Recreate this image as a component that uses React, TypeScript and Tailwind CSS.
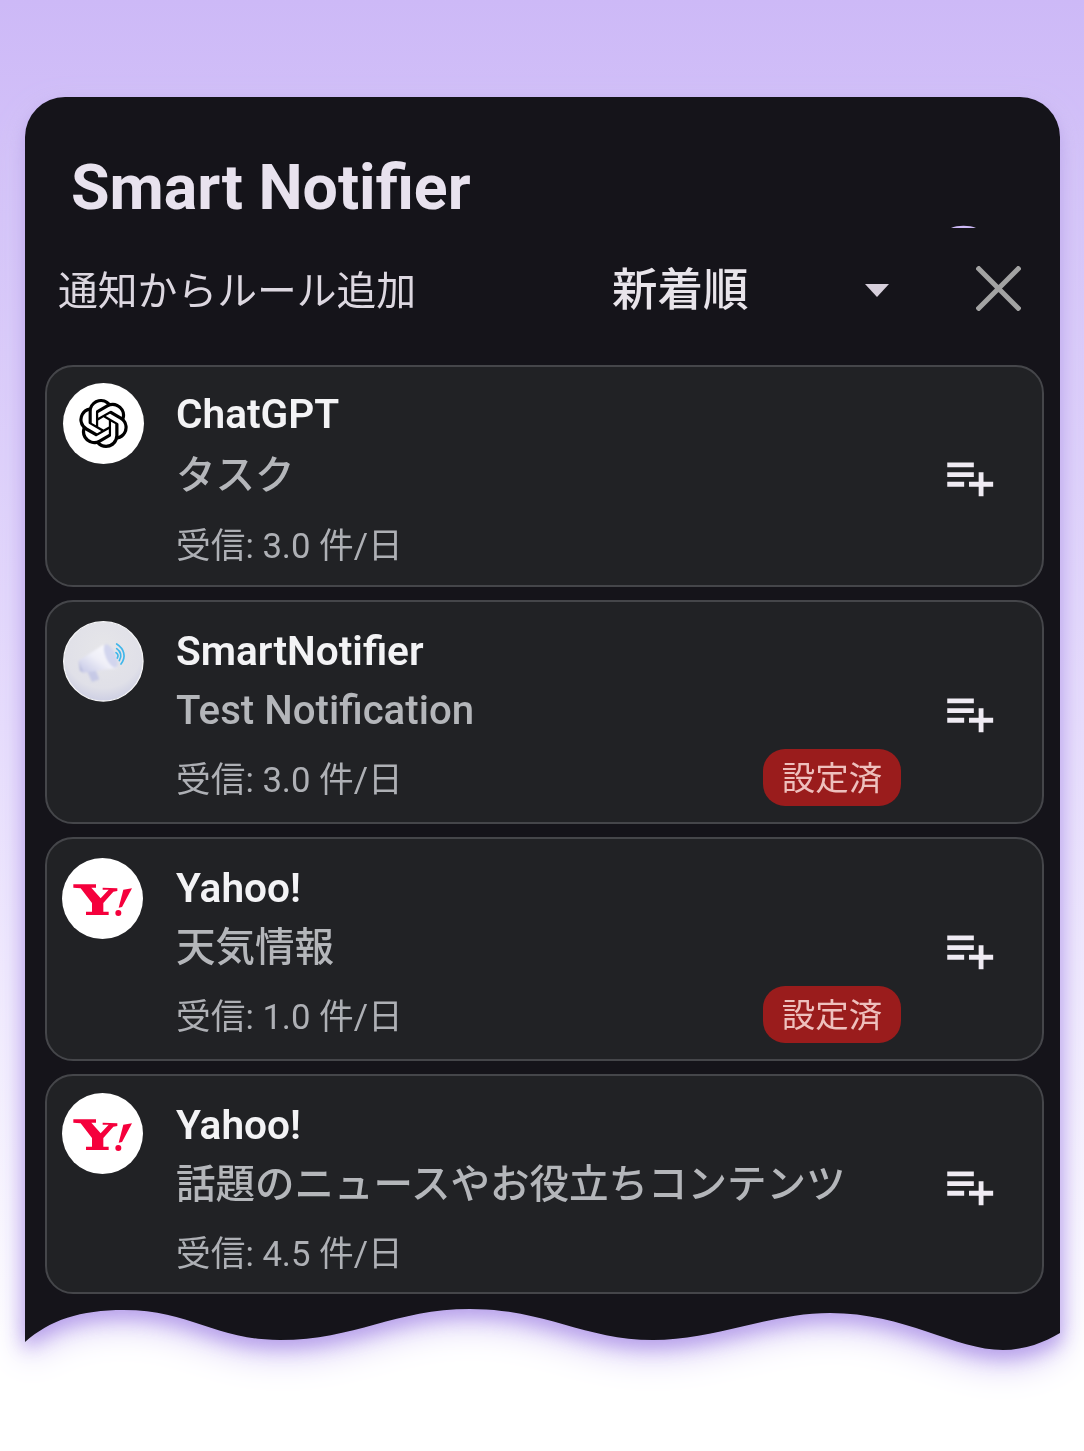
import React from "react";
import { MdPlaylistAdd } from "react-icons/md";
import { SiOpenai } from "react-icons/si";

const ChatGptAvatar = () => (
  <div className="flex h-[81px] w-[81px] items-center justify-center rounded-full bg-white">
    <SiOpenai className="h-[49px] w-[49px] text-black" />
  </div>
);

const MegaphoneAvatar = () => (
  <svg viewBox="9 9 243 243" className="h-[81px] w-[81px]">
    <defs>
      <radialGradient id="megaBg" cx="50%" cy="35%" r="70%">
        <stop offset="0%" stopColor="#e6e6e9" />
        <stop offset="70%" stopColor="#e0e0e8" />
        <stop offset="100%" stopColor="#c8cae2" />
      </radialGradient>
      <linearGradient id="megaBody" x1="0" y1="1" x2="1" y2="0">
        <stop offset="0%" stopColor="#c3c6e6" />
        <stop offset="50%" stopColor="#f0f0f8" />
        <stop offset="100%" stopColor="#fbfbfd" />
      </linearGradient>
      <filter id="soft">
        <feGaussianBlur stdDeviation="3" />
      </filter>
    </defs>
    <circle cx="130" cy="130" r="119" fill="url(#megaBg)" stroke="#f4f4f6" strokeWidth="4" />
    <g filter="url(#soft)">
      <path d="M80 156 L104 150 L118 184 L96 192 Z" fill="#c6c9e6" />
      <path d="M56 128 L130 80 L172 150 L70 164 Z" fill="url(#megaBody)" />
      <ellipse cx="152" cy="114" rx="15" ry="38" transform="rotate(-24 152 114)" fill="#d2d5ee" />
      <path d="M56 128 L70 164 L60 158 Z" fill="#b4b8de" />
    </g>
    <g fill="none" stroke="#3fb6ea" strokeWidth="5" strokeLinecap="round">
      <path d="M170 78 C192 92 200 116 183 138" />
      <path d="M170 92 C182 100 187 114 178 128" />
      <path d="M168 104 C174 108 176 114 172 120" />
    </g>
  </svg>
);

const YahooAvatar = () => (
  <svg viewBox="6 9 243 243" className="h-[81px] w-[81px]">
    <circle cx="127.5" cy="130.5" r="121.5" fill="#ffffff" />
    <path
      d="M40 88 L108 88 L108 98 L94 98 L122 130 L146 104 L128 104 L128 98 L172 100 L172 108 L160 110 L130 144 L130 170 L146 170 L146 180 L78 180 L78 170 L96 170 L96 144 L62 100 L40 98 Z"
      fill="#f5003c"
    />
    <path d="M190 104 L216 100 L186 156 L176 158 Z" fill="#f5003c" />
    <circle cx="175" cy="174" r="9" fill="#f5003c" />
  </svg>
);

interface CardProps {
  avatar: React.ReactNode;
  name: string;
  title: string;
  titleClass: string;
  rate: string;
  configured?: boolean;
  cardClass: string;
  avatarClass: string;
  textClass: string;
  iconClass: string;
}

const cards: CardProps[] = [
  {
    avatar: <ChatGptAvatar />,
    name: "ChatGPT",
    title: "タスク",
    titleClass: "text-[39.5px]",
    rate: "受信: 3.0 件/日",
    cardClass: "h-[222px]",
    avatarClass: "pl-[16px] pt-[16px]",
    textClass: "gap-[1.5px] pt-[22px]",
    iconClass: "pt-[81px]",
  },
  {
    avatar: <MegaphoneAvatar />,
    name: "SmartNotifier",
    title: "Test Notification",
    titleClass: "text-[40.2px]",
    rate: "受信: 3.0 件/日",
    configured: true,
    cardClass: "h-[224px]",
    avatarClass: "pl-[16px] pt-[19px]",
    textClass: "pt-[24px]",
    iconClass: "pt-[82px]",
  },
  {
    avatar: <YahooAvatar />,
    name: "Yahoo!",
    title: "天気情報",
    titleClass: "text-[39.5px]",
    rate: "受信: 1.0 件/日",
    configured: true,
    cardClass: "h-[224px]",
    avatarClass: "pl-[15px] pt-[19px]",
    textClass: "pt-[24px]",
    iconClass: "pt-[82px]",
  },
  {
    avatar: <YahooAvatar />,
    name: "Yahoo!",
    title: "話題のニュースやお役立ちコンテンツ",
    titleClass: "text-[39.5px]",
    rate: "受信: 4.5 件/日",
    cardClass: "h-[220px]",
    avatarClass: "pl-[15px] pt-[17px]",
    textClass: "pt-[24px]",
    iconClass: "pt-[81px]",
  },
];

const Card: React.FC<CardProps> = ({
  avatar,
  name,
  title,
  titleClass,
  rate,
  configured,
  cardClass,
  avatarClass,
  textClass,
  iconClass,
}) => {
  return (
    <div className={`flex rounded-[28px] border-2 border-[#45464a] bg-[#212225] ${cardClass}`}>
      <div className={`w-[129px] shrink-0 ${avatarClass}`}>{avatar}</div>
      <div className={`flex w-[725px] shrink-0 flex-col ${textClass}`}>
        <div className="flex h-[50px] items-center text-[40.6px] font-semibold text-[#f3f3f5]">
          {name}
        </div>
        <div className={`flex h-[70px] items-center font-medium text-[#b4b6ba] ${titleClass}`}>
          {title}
        </div>
        <div className="flex h-[68px] items-center justify-between text-[34.7px] text-[#aeb0b5]">
          <span>{rate}</span>
          {configured && (
            <span className="mb-[5px] flex h-[57px] w-[138px] items-center justify-center rounded-[22px] bg-[#9a1c1c] pt-[3px] text-[33.5px] text-[#eec0bd]">
              設定済
            </span>
          )}
        </div>
      </div>
      <div className={`pl-[39px] ${iconClass}`}>
        <MdPlaylistAdd className="h-[58px] w-[58px] text-[#efebf3]" />
      </div>
    </div>
  );
};

export default function App() {
  return (
    <div className="h-[1451px] w-full overflow-hidden bg-linear-to-b from-[#cdb9f7] via-[#e8defd] via-50% to-white to-92% pt-[97px] pl-[25px] font-['Roboto','Noto_Sans_CJK_JP',sans-serif]">
      <div className="w-[1035px] [filter:drop-shadow(0_7px_9px_#b7a0ea)_drop-shadow(0_9px_14px_#d8ccf6)]">
        <div className="relative h-[1204px] rounded-t-[40px] bg-[#15141a]">
          <div className="flex h-[137px] items-end pl-[46px] pb-[8px]">
            <h1 className="text-[62.6px] leading-[76px] font-bold text-[#e8e2ee]">Smart Notifier</h1>
          </div>
          <svg viewBox="0 0 25 3" className="absolute top-[128px] left-[926px] h-[3px] w-[25px]">
            <path d="M0 3 C6 0 19 0 25 3 Z" fill="#cdb9f7" />
          </svg>
          <div className="flex h-[131px] items-start pt-[28px] pl-[33px]">
            <span className="w-[554px] text-[39.8px] leading-[60px] text-[#dcd7e0]">
              通知からルール追加
            </span>
            <span className="flex w-[277px] items-center justify-between">
              <span className="text-[45.5px] leading-[58px] font-medium text-[#e8e4ea]">新着順</span>
              <svg viewBox="0 0 24 13" className="-mt-[2px] h-[13px] w-[24px]">
                <path d="M0 0 H24 L12 13 Z" fill="#d6cfdb" />
              </svg>
            </span>
            <svg
              viewBox="0 0 45 45"
              className="mt-[4px] ml-[87px] h-[45px] w-[45px]"
              stroke="#a3a3a3"
              strokeWidth="5"
            >
              <path d="M1 1 L44 44 M44 1 L1 44" />
            </svg>
          </div>
          <div className="ml-[20px] flex w-[999px] flex-col gap-[13px]">
            {cards.map((card, index) => (
              <Card key={index} {...card} />
            ))}
          </div>
        </div>
        <svg viewBox="0 0 1035 52" className="-mt-px block h-[52px] w-[1035px]">
          <path
            d="M0 0 H1035 V33 C1020 42 1000 50 978 50 C930 50 880 13 805 13 C745 13 690 40 628 40 C560 40 520 9 445 9 C370 9 330 40 255 40 C190 40 165 10 99 10 C55 10 25 20 0 42 Z"
            fill="#15141a"
          />
        </svg>
      </div>
    </div>
  );
}
